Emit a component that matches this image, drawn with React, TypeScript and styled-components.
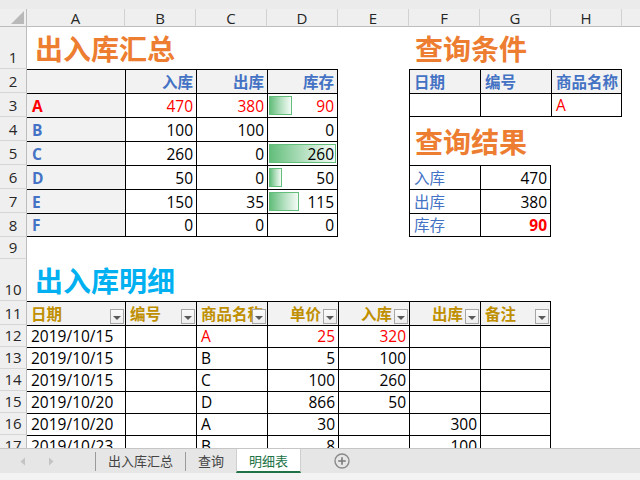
import React from 'react';
import styled, { createGlobalStyle } from 'styled-components';

const GlobalStyle = createGlobalStyle`
  html, body {
    margin: 0;
    padding: 0;
  }
  body {
    width: 640px;
    height: 480px;
    overflow: hidden;
    background: #fff;
    font-family: "Open Sans", "Noto Sans CJK SC", sans-serif;
  }
  * {
    box-sizing: border-box;
  }
`;

const COLUMNS = ['A', 'B', 'C', 'D', 'E', 'F', 'G', 'H', 'I'];
const ROW_HEIGHTS = [42, 24, 24, 24, 24, 24, 24, 24, 22, 42, 24, 22, 22, 22, 22, 22, 22];

const LINE = '1px solid #000';
const HEAD_FILL = '#f2f2f2';
const BLUE = '#4472c4';
const RED = '#ff0000';
const GOLD = '#bf8f00';

const summary = [
  { key: 'A', in: 470, out: 380, stock: 90, hot: true },
  { key: 'B', in: 100, out: 100, stock: 0 },
  { key: 'C', in: 260, out: 0, stock: 260 },
  { key: 'D', in: 50, out: 0, stock: 50 },
  { key: 'E', in: 150, out: 35, stock: 115 },
  { key: 'F', in: 0, out: 0, stock: 0 },
];
const maxStock = Math.max(...summary.map((s) => s.stock));

const detailHead = [
  { label: '日期', align: 'left' },
  { label: '编号', align: 'left' },
  { label: '商品名称', align: 'left' },
  { label: '单价', align: 'right' },
  { label: '入库', align: 'right' },
  { label: '出库', align: 'right' },
  { label: '备注', align: 'left' },
] as const;

const details = [
  { date: '2019/10/15', name: 'A', price: 25, in: 320, out: '', hot: true },
  { date: '2019/10/15', name: 'B', price: 5, in: 100, out: '' },
  { date: '2019/10/15', name: 'C', price: 100, in: 260, out: '' },
  { date: '2019/10/20', name: 'D', price: 866, in: 50, out: '' },
  { date: '2019/10/20', name: 'A', price: 30, in: '', out: 300 },
  { date: '2019/10/23', name: 'B', price: 8, in: '', out: 100 },
];

const queryResult = [
  { label: '入库', value: 470 },
  { label: '出库', value: 380 },
  { label: '库存', value: 90, hot: true },
];

const App = () => {
  return (
    <>
      <GlobalStyle />
      <Page>
        <TopStrip />
        <Sheet>
          <Corner>
            <CornerMark />
          </Corner>
          {COLUMNS.map((c, i) => (
            <ColHead key={c} $c={i + 1}>
              {c}
            </ColHead>
          ))}
          {ROW_HEIGHTS.map((_, i) => (
            <RowHead key={`row-${i}`} $r={i + 1}>
              {i + 1}
            </RowHead>
          ))}

          {/* 出入库汇总 */}
          <Title $c={1} $r={1} $cs={3} $tone="#ed7d31">
            出入库汇总
          </Title>
          <Cell $c={1} $r={2} $fill={HEAD_FILL} $t />
          {['入库', '出库', '库存'].map((h, i) => (
            <HeadLabel key={h} $c={2 + i} $r={2} $t $l $rt={i === 2} $align="right" $pr={3}>
              {h}
            </HeadLabel>
          ))}
          {summary.map((s, i) => {
            const r = 3 + i;
            const last = i === summary.length - 1;
            return (
              <React.Fragment key={s.key}>
                <KeyCell $c={1} $r={r} $t $b={last} $hot={s.hot}>
                  {s.key}
                </KeyCell>
                <Cell $c={2} $r={r} $t $l $b={last} $align="right" $pr={3} $color={s.hot ? RED : undefined}>
                  {s.in}
                </Cell>
                <Cell $c={3} $r={r} $t $l $b={last} $align="right" $pr={3} $color={s.hot ? RED : undefined}>
                  {s.out}
                </Cell>
                <Cell $c={4} $r={r} $t $l $rt $b={last} $align="right" $pr={3} $color={s.hot ? RED : undefined}>
                  {s.stock > 0 && <DataBar style={{ width: `${(s.stock / maxStock) * 67}px` }} />}
                  <Value>{s.stock}</Value>
                </Cell>
              </React.Fragment>
            );
          })}

          {/* 查询条件 */}
          <Title $c={6} $r={1} $cs={3} $tone="#ed7d31" $pl={6}>
            查询条件
          </Title>
          {['日期', '编号', '商品名称'].map((h, i) => (
            <HeadLabel key={h} $c={6 + i} $r={2} $t $l $rt={i === 2}>
              {h}
            </HeadLabel>
          ))}
          <Cell $c={6} $r={3} $t $l $b />
          <Cell $c={7} $r={3} $t $l $b />
          <Cell $c={8} $r={3} $t $l $rt $b $color={RED}>
            A
          </Cell>

          {/* 查询结果 */}
          <Title $c={6} $r={4} $cs={2} $rs={2} $tone="#ed7d31" $pl={5} $l $middle>
            查询结果
          </Title>
          {queryResult.map((q, i) => {
            const r = 6 + i;
            const last = i === queryResult.length - 1;
            return (
              <React.Fragment key={q.label}>
                <Cell $c={6} $r={r} $t $l $b={last} $color={BLUE}>
                  {q.label}
                </Cell>
                <Cell
                  $c={7}
                  $r={r}
                  $t
                  $l
                  $rt
                  $b={last}
                  $align="right"
                  $pr={3}
                  $color={q.hot ? RED : undefined}
                  $bold={q.hot}
                >
                  {q.value}
                </Cell>
              </React.Fragment>
            );
          })}

          {/* 出入库明细 */}
          <Title $c={1} $r={10} $cs={3} $tone="#00b0f0">
            出入库明细
          </Title>
          {detailHead.map((h, i) => (
            <FilterHead
              key={h.label}
              $c={1 + i}
              $r={11}
              $t
              $l={i > 0}
              $rt={i === detailHead.length - 1}
              $align={h.align}
              $pr={h.align === 'right' ? 17 : 4}
            >
              {h.label}
              <FilterButton />
            </FilterHead>
          ))}
          {details.map((d, i) => {
            const r = 12 + i;
            const tone = d.hot ? RED : undefined;
            return (
              <React.Fragment key={`d-${i}`}>
                <Cell $c={1} $r={r} $t>
                  {d.date}
                </Cell>
                <Cell $c={2} $r={r} $t $l />
                <Cell $c={3} $r={r} $t $l $color={tone}>
                  {d.name}
                </Cell>
                <Cell $c={4} $r={r} $t $l $align="right" $pr={3} $color={tone}>
                  {d.price}
                </Cell>
                <Cell $c={5} $r={r} $t $l $align="right" $pr={3} $color={tone}>
                  {d.in}
                </Cell>
                <Cell $c={6} $r={r} $t $l $align="right" $pr={3}>
                  {d.out}
                </Cell>
                <Cell $c={7} $r={r} $t $l $rt />
              </React.Fragment>
            );
          })}
        </Sheet>

        <TabBar>
          <NavArea>
            <NavButton>
              <svg width="6" height="9" viewBox="0 0 6 9">
                <polygon points="5,0.5 5,8.5 0.5,4.5" fill="#c4c4c4" />
              </svg>
            </NavButton>
            <NavButton>
              <svg width="6" height="9" viewBox="0 0 6 9">
                <polygon points="1,0.5 1,8.5 5.5,4.5" fill="#c4c4c4" />
              </svg>
            </NavButton>
          </NavArea>
          <TabDivider />
          <Tab>出入库汇总</Tab>
          <TabDivider />
          <Tab>查询</Tab>
          <Tab $active>明细表</Tab>
          <AddSheet>
            <svg width="16" height="16" viewBox="0 0 16 16">
              <circle cx="8" cy="8" r="7" fill="none" stroke="#8a8a8a" strokeWidth="1.4" />
              <path d="M8 4.2v7.6M4.2 8h7.6" stroke="#7a7a7a" strokeWidth="1.6" />
            </svg>
          </AddSheet>
        </TabBar>
        <StatusStrip />
      </Page>
    </>
  );
};

export default App;

const Page = styled.div`
  width: 640px;
  height: 480px;
  display: flex;
  flex-direction: column;
  overflow: hidden;
`;

const TopStrip = styled.div`
  flex: none;
  height: 9px;
  background: #ebebeb;
`;

const Sheet = styled.div`
  flex: none;
  width: 640px;
  height: 439px;
  overflow: hidden;
  display: grid;
  grid-template-columns: 27px 98px repeat(8, 71px);
  grid-template-rows: 18px ${ROW_HEIGHTS.map((h) => `${h}px`).join(' ')};
  align-content: start;
  justify-content: start;
  background: #fff;
`;

const Corner = styled.div`
  grid-column: 1;
  grid-row: 1;
  background: #efefef;
  border-right: 1px solid #bdbdbd;
  border-bottom: 1px solid #bdbdbd;
  display: flex;
  align-items: flex-end;
  justify-content: flex-end;
  padding: 0 2px 2px 0;
`;

const CornerMark = styled.span`
  width: 0;
  height: 0;
  border-left: 13px solid transparent;
  border-bottom: 13px solid #b9b9b9;
`;

const ColHead = styled.div<{ $c: number }>`
  grid-column: ${(p) => p.$c + 1};
  grid-row: 1;
  background: #efefef;
  border-right: 1px solid #d2d2d2;
  border-bottom: 1px solid #bdbdbd;
  display: flex;
  align-items: center;
  justify-content: center;
  font-size: 15px;
  line-height: 18px;
  color: #262626;
  overflow: hidden;
`;

const RowHead = styled.div<{ $r: number }>`
  grid-column: 1;
  grid-row: ${(p) => p.$r + 1};
  background: #efefef;
  border-right: 1px solid #bdbdbd;
  border-bottom: 1px solid #d6d6d6;
  display: flex;
  align-items: flex-end;
  justify-content: center;
  padding-bottom: 1px;
  font-size: 15px;
  line-height: 20px;
  color: #262626;
  overflow: hidden;
`;

type CellProps = {
  $c: number;
  $r: number;
  $cs?: number;
  $rs?: number;
  $t?: boolean;
  $l?: boolean;
  $rt?: boolean;
  $b?: boolean;
  $fill?: string;
  $color?: string;
  $bold?: boolean;
  $align?: 'left' | 'right' | 'center';
  $pr?: number;
  $pl?: number;
};

const Cell = styled.div<CellProps>`
  grid-column: ${(p) => p.$c + 1} / span ${(p) => p.$cs ?? 1};
  grid-row: ${(p) => p.$r + 1} / span ${(p) => p.$rs ?? 1};
  position: relative;
  min-width: 0;
  display: flex;
  align-items: flex-end;
  justify-content: ${(p) =>
    p.$align === 'right' ? 'flex-end' : p.$align === 'center' ? 'center' : 'flex-start'};
  padding: 0 ${(p) => p.$pr ?? 4}px 1px ${(p) => p.$pl ?? 4}px;
  background: ${(p) => p.$fill ?? 'transparent'};
  color: ${(p) => p.$color ?? '#000'};
  font-size: 15.5px;
  font-weight: ${(p) => (p.$bold ? 700 : 400)};
  line-height: 20px;
  white-space: nowrap;
  overflow: hidden;
  border-top: ${(p) => (p.$t ? LINE : 'none')};
  border-left: ${(p) => (p.$l ? LINE : 'none')};
  border-right: ${(p) => (p.$rt ? LINE : 'none')};
  border-bottom: ${(p) => (p.$b ? LINE : 'none')};
`;

const HeadLabel = styled(Cell)`
  background: ${HEAD_FILL};
  color: ${BLUE};
  font-weight: 700;
`;

const KeyCell = styled(Cell)<{ $hot?: boolean }>`
  background: ${HEAD_FILL};
  color: ${(p) => (p.$hot ? RED : BLUE)};
  font-weight: 700;
  padding-left: 5px;
`;

const FilterHead = styled(Cell)`
  background: ${HEAD_FILL};
  color: ${GOLD};
  font-weight: 700;
`;

const FilterButton = styled.span`
  position: absolute;
  right: 1px;
  bottom: 1px;
  width: 14px;
  height: 15px;
  border: 1px solid #a6a6a6;
  background: linear-gradient(#fbfbfb, #eeeeee);
  display: flex;
  align-items: center;
  justify-content: center;

  &::after {
    content: '';
    width: 0;
    height: 0;
    margin-top: 2px;
    border-left: 4px solid transparent;
    border-right: 4px solid transparent;
    border-top: 4px solid #5a5a5a;
  }
`;

const Title = styled(Cell)<{ $tone: string; $middle?: boolean }>`
  align-items: ${(p) => (p.$middle ? 'center' : 'flex-end')};
  padding-left: ${(p) => p.$pl ?? 8}px;
  padding-bottom: ${(p) => (p.$middle ? 0 : 4)}px;
  color: ${(p) => p.$tone};
  font-family: "Noto Sans CJK SC", sans-serif;
  font-size: 28px;
  font-weight: 700;
  line-height: 34px;
`;

const DataBar = styled.span`
  position: absolute;
  left: 1px;
  top: 2px;
  bottom: 2px;
  border: 1px solid #63be7b;
  background: linear-gradient(90deg, #63be7b 0%, #b9e2c4 55%, #f4fbf6 100%);
`;

const Value = styled.span`
  position: relative;
`;

const TabBar = styled.div`
  flex: none;
  height: 25px;
  border-top: 1px solid #c6c6c6;
  background: #e6e6e6;
  display: flex;
  align-items: stretch;
  font-family: "Noto Sans CJK SC", sans-serif;
  font-size: 13px;
`;

const NavArea = styled.div`
  width: 95px;
  padding-left: 9px;
  display: flex;
  align-items: center;
`;

const NavButton = styled.span`
  width: 28px;
  display: flex;
  align-items: center;
  justify-content: center;
`;

const TabDivider = styled.span`
  width: 1px;
  margin: 3px 0 2px;
  background: #9b9b9b;
`;

const Tab = styled.div<{ $active?: boolean }>`
  display: flex;
  align-items: center;
  padding: 0 ${(p) => (p.$active ? 12 : 11)}px;
  color: ${(p) => (p.$active ? '#217346' : '#444')};
  background: ${(p) => (p.$active ? '#fff' : 'transparent')};
  border-bottom: 2px solid ${(p) => (p.$active ? '#217346' : 'transparent')};
  border-left: 1px solid ${(p) => (p.$active ? '#cfcfcf' : 'transparent')};
  border-right: 1px solid ${(p) => (p.$active ? '#cfcfcf' : 'transparent')};
`;

const AddSheet = styled.span`
  margin-left: 33px;
  display: flex;
  align-items: center;
`;

const StatusStrip = styled.div`
  flex: 1;
  background: #f3f3f3;
`;
